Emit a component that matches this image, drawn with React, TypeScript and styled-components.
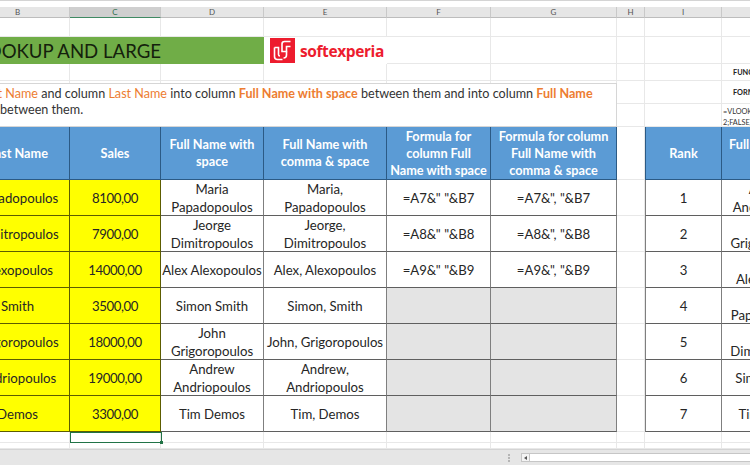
import React from 'react';
import styled, { createGlobalStyle } from 'styled-components';

const COLUMNS = ['A', 'B', 'C', 'D', 'E', 'F', 'G', 'H', 'I', 'J', 'K'];
const ROW_COUNT = 16;

const PEOPLE = [
	{ last: 'Papadopoulos', sales: '8100,00', full: 'Maria\nPapadopoulos', comma: 'Maria,\nPapadopoulos', f1: '=A7&" "&B7', f2: '=A7&", "&B7' },
	{ last: 'Dimitropoulos', sales: '7900,00', full: 'Jeorge\nDimitropoulos', comma: 'Jeorge,\nDimitropoulos', f1: '=A8&" "&B8', f2: '=A8&", "&B8' },
	{ last: 'Alexopoulos', sales: '14000,00', full: 'Alex Alexopoulos', comma: 'Alex, Alexopoulos', f1: '=A9&" "&B9', f2: '=A9&", "&B9' },
	{ last: 'Smith', sales: '3500,00', full: 'Simon Smith', comma: 'Simon, Smith' },
	{ last: 'Grigoropoulos', sales: '18000,00', full: 'John\nGrigoropoulos', comma: 'John, Grigoropoulos' },
	{ last: 'Andriopoulos', sales: '19000,00', full: 'Andrew\nAndriopoulos', comma: 'Andrew,\nAndriopoulos' },
	{ last: 'Demos', sales: '3300,00', full: 'Tim Demos', comma: 'Tim, Demos' },
];

const RANKED = ['Andrew\nAndriopoulos', 'John\nGrigoropoulos', 'Alex\nAlexopoulos', 'Maria\nPapadopoulos', 'Jeorge\nDimitropoulos', 'Simon Smith', 'Tim Demos'];

const GlobalStyle = createGlobalStyle`
	html, body {
		margin: 0;
		padding: 0;
		background: #ffffff;
	}
	body {
		font-family: 'Lato', 'Liberation Sans', sans-serif;
		overflow: hidden;
	}
`;

const Page = styled.div`
	display: flex;
	flex-direction: column;
	width: 750px;
	height: 465px;
	overflow: hidden;
	background: #ffffff;
`;

const TopEdge = styled.div`
	flex: 0 0 7px;
	box-sizing: border-box;
	border-top: 1px solid #d4d4d4;
	background: #ffffff;
`;

const Sheet = styled.div`
	display: grid;
	flex: 0 0 442px;
	margin-left: -234px;
	width: 1100px;
	grid-template-columns: 200px 104px 91px 103px 123px 104px 126px 28px 77px 100px 144px;
	grid-template-rows: 11px 19px 27px 17px 23px 23px 53px repeat(7, 36px) 11px 6px;
`;

type PlaceProps = { $col: number; $row: number; $colSpan?: number; $rowSpan?: number };

const Placed = styled.div<PlaceProps>`
	box-sizing: border-box;
	grid-column: ${({ $col, $colSpan }) => `${$col} / span ${$colSpan || 1}`};
	grid-row: ${({ $row, $rowSpan }) => `${$row} / span ${$rowSpan || 1}`};
	min-width: 0;
`;

const ColumnHead = styled(Placed)<{ $active?: boolean }>`
	display: flex;
	align-items: center;
	justify-content: center;
	font-size: 8px;
	color: ${({ $active }) => ($active ? '#2f6f4f' : '#555555')};
	background: ${({ $active }) => ($active ? '#cfcfcf' : '#e6e6e6')};
	border-right: 1px solid #c9c9c9;
	border-bottom: ${({ $active }) => ($active ? '1px solid #3f8a63' : '1px solid #bdbdbd')};
`;

const GridLine = styled(Placed)`
	border-right: 1px solid #e8e8e8;
	border-bottom: 1px solid #e8e8e8;
`;

const TitleBand = styled(Placed)`
	display: flex;
	align-items: center;
	justify-content: flex-end;
	padding-right: 103px;
	background: #70ad47;
	color: #14210c;
	font-size: 18.6px;
	white-space: nowrap;
	overflow: hidden;
`;

const LogoCell = styled(Placed)`
	display: flex;
	align-items: center;
	gap: 5px;
	padding-left: 6px;
	background: #ffffff;
	z-index: 1;
`;

const LogoText = styled.span`
	font-family: 'Open Sans', 'Liberation Sans', sans-serif;
	font-size: 15.5px;
	font-weight: 700;
	letter-spacing: -0.4px;
	color: #ed1c2e;
`;

const Description = styled(Placed)`
	margin-top: 2px;
	padding: 2px 0 0 115px;
	background: #ffffff;
	border-top: 1px solid #d6d6d6;
	border-bottom: 1px solid #d6d6d6;
	border-right: 1px solid #d6d6d6;
	font-size: 12.6px;
	line-height: 16px;
	color: #333333;
	white-space: nowrap;
	z-index: 1;
`;

const Orange = styled.span<{ $bold?: boolean }>`
	color: #ed7d31;
	font-weight: ${({ $bold }) => ($bold ? 700 : 400)};
`;

const SideLabel = styled(Placed)`
	display: flex;
	align-items: center;
	padding-left: 11px;
	font-size: 7.3px;
	font-weight: 700;
	color: #222222;
	border-right: 1px solid #e8e8e8;
	border-bottom: 1px solid #e8e8e8;
`;

const SideFormula = styled(Placed)`
	padding: 2px 0 0 1px;
	font-size: 7.3px;
	line-height: 11px;
	color: #333333;
	white-space: pre;
	overflow: hidden;
	z-index: 1;
`;

const HeaderCell = styled(Placed)<{ $first?: boolean }>`
	display: flex;
	align-items: center;
	justify-content: center;
	text-align: center;
	background: #5b9bd5;
	color: #ffffff;
	font-size: 12.7px;
	font-weight: 700;
	line-height: 17px;
	white-space: pre-line;
	border-right: 1px solid #2b5a85;
	border-bottom: 1px solid #2b5a85;
	border-left: ${({ $first }) => ($first ? '1px solid #2b5a85' : 'none')};
`;

const DataCell = styled(Placed)<{ $tone?: 'yellow' | 'grey'; $first?: boolean }>`
	display: flex;
	align-items: center;
	justify-content: center;
	text-align: center;
	background: ${({ $tone }) => ($tone === 'yellow' ? '#ffff00' : $tone === 'grey' ? '#e4e4e4' : '#ffffff')};
	color: #262626;
	font-size: 13.2px;
	line-height: 18px;
	white-space: pre-line;
	border-right: 1px solid ${({ $tone }) => ($tone === 'yellow' ? '#5c5c00' : '#7f7f7f')};
	border-bottom: 1px solid ${({ $tone }) => ($tone === 'yellow' ? '#5c5c00' : '#5f5f5f')};
	border-left: ${({ $first }) => ($first ? '1px solid #7f7f7f' : 'none')};
`;

const SalesCell = styled(DataCell)`
	letter-spacing: -0.4px;
`;

const SelectedCell = styled(Placed)`
	position: relative;
	border: 1px solid #217346;
	margin: 0 -1px 0 0;
	z-index: 2;

	&::after {
		content: '';
		position: absolute;
		right: -2px;
		bottom: -2px;
		width: 3px;
		height: 3px;
		background: #217346;
	}
`;

const BottomBar = styled.div`
	display: flex;
	align-items: center;
	flex: 1;
	box-sizing: border-box;
	padding-left: 508px;
	background: #e6e6e6;
	border-top: 1px solid #d4d4d4;
`;

const Grip = styled.div`
	width: 3px;
	height: 8px;
	margin-right: 8px;
	border-left: 2px dotted #b5b5b5;
`;

const ScrollButton = styled.div`
	display: flex;
	align-items: center;
	justify-content: center;
	box-sizing: border-box;
	width: 9px;
	height: 9px;
	background: #f4f4f4;
	border: 1px solid #c6c6c6;
`;

const ArrowLeft = styled.div`
	width: 0;
	height: 0;
	border-top: 2.5px solid transparent;
	border-bottom: 2.5px solid transparent;
	border-right: 3px solid #555555;
`;

const ScrollTrack = styled.div`
	flex: 1;
	height: 9px;
	box-sizing: border-box;
	background: #ffffff;
	border: 1px solid #c6c6c6;
	border-left: none;
	border-right: none;
`;

const LogoMark = () => (
	<svg width="25" height="25" viewBox="0 0 25 25" aria-hidden="true">
		<rect width="25" height="25" fill="#ed1c2e" />
		<path d="M20.5 3.5h-6a2.5 2.5 0 0 0-2.5 2.5v7.5h4.5v-5h4" fill="none" stroke="#ffffff" strokeWidth="1.6" />
		<path d="M16.5 13.5v3.5a3 3 0 0 1-3 3" fill="none" stroke="#ffffff" strokeWidth="1.6" />
		<path d="M4.5 9.5v9a3 3 0 0 0 3 3h5" fill="none" stroke="#ffffff" strokeWidth="1.6" />
		<path d="M4.5 9.5h4v7a1.5 1.5 0 0 0 1.5 1.5" fill="none" stroke="#ffffff" strokeWidth="1.6" />
	</svg>
);

const App = () => {
	const gridLines: React.ReactNode[] = [];
	for (let row = 2; row <= ROW_COUNT; row++) {
		COLUMNS.forEach((name, index) => {
			gridLines.push(<GridLine key={`${name}${row}`} $col={index + 1} $row={row} />);
		});
	}

	return (
		<Page>
			<GlobalStyle />
			<TopEdge />
			<Sheet>
				{COLUMNS.map((name, index) => (
					<ColumnHead key={name} $col={index + 1} $row={1} $active={name === 'C'}>
						{name}
					</ColumnHead>
				))}
				{gridLines}

				<TitleBand $col={1} $row={3} $colSpan={4}>VLOOKUP AND LARGE</TitleBand>
				<LogoCell $col={5} $row={3}>
					<LogoMark />
					<LogoText>softexperia</LogoText>
				</LogoCell>

				<Description $col={1} $row={5} $colSpan={7} $rowSpan={2}>
					Combine column <Orange>First Name</Orange> and column <Orange>Last Name</Orange> into column{' '}
					<Orange $bold>Full Name with space</Orange> between them and into column <Orange $bold>Full Name</Orange>
					<br />
					<Orange $bold>with comma &amp; space</Orange> between them.
				</Description>

				<SideLabel $col={10} $row={4}>FUNCTION</SideLabel>
				<SideLabel $col={10} $row={5}>FORMULA</SideLabel>
				<SideFormula $col={10} $row={6} $colSpan={2}>{'=VLOOKUP(LARGE(C7:C13;I7);B7:E13;\n2;FALSE)'}</SideFormula>

				<HeaderCell $col={2} $row={7} $first>Last Name</HeaderCell>
				<HeaderCell $col={3} $row={7}>Sales</HeaderCell>
				<HeaderCell $col={4} $row={7}>{'Full Name with\nspace'}</HeaderCell>
				<HeaderCell $col={5} $row={7}>{'Full Name with\ncomma & space'}</HeaderCell>
				<HeaderCell $col={6} $row={7}>{'Formula for\ncolumn Full\nName with space'}</HeaderCell>
				<HeaderCell $col={7} $row={7}>{'Formula for column\nFull Name with\ncomma & space'}</HeaderCell>
				<HeaderCell $col={9} $row={7} $first>Rank</HeaderCell>
				<HeaderCell $col={10} $row={7}>{'Full Name with\nspace'}</HeaderCell>

				{PEOPLE.map((person, index) => {
					const row = index + 8;
					return (
						<React.Fragment key={person.last}>
							<DataCell $col={2} $row={row} $tone="yellow">{person.last}</DataCell>
							<SalesCell $col={3} $row={row} $tone="yellow">{person.sales}</SalesCell>
							<DataCell $col={4} $row={row}>{person.full}</DataCell>
							<DataCell $col={5} $row={row}>{person.comma}</DataCell>
							<DataCell $col={6} $row={row} $tone={person.f1 ? undefined : 'grey'}>{person.f1}</DataCell>
							<DataCell $col={7} $row={row} $tone={person.f2 ? undefined : 'grey'}>{person.f2}</DataCell>
							<DataCell $col={9} $row={row} $first>{index + 1}</DataCell>
							<DataCell $col={10} $row={row}>{RANKED[index]}</DataCell>
						</React.Fragment>
					);
				})}

				<SelectedCell $col={3} $row={15} />
			</Sheet>
			<BottomBar>
				<Grip />
				<ScrollButton><ArrowLeft /></ScrollButton>
				<ScrollTrack />
			</BottomBar>
		</Page>
	);
};

export default App;
